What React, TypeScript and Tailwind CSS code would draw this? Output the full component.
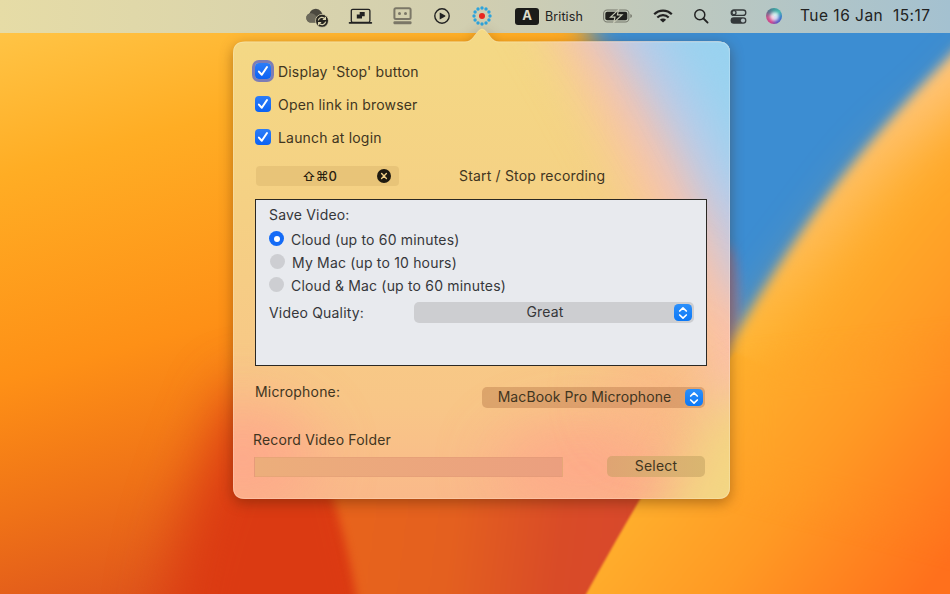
import { useState } from 'react'
import type { ReactNode } from 'react'

const RADIO_OPTIONS = [
  { id: 'cloud', label: 'Cloud (up to 60 minutes)', inset: 'pl-[13px]' },
  { id: 'mac', label: 'My Mac (up to 10 hours)', inset: 'pl-[14px]' },
  { id: 'both', label: 'Cloud & Mac (up to 60 minutes)', inset: 'pl-[13px]' },
]

const DOTS = Array.from({ length: 12 }, (_, i) => (i * Math.PI) / 6)

function Blur({ id, amount }: { id: string; amount: number }) {
  return (
    <filter id={id} x="-70%" y="-70%" width="240%" height="240%" colorInterpolationFilters="sRGB">
      <feGaussianBlur stdDeviation={amount} />
    </filter>
  )
}

function Wallpaper() {
  return (
    <svg className="absolute inset-0" width="950" height="594" viewBox="0 0 950 594">
      <defs>
        <linearGradient id="base" gradientUnits="userSpaceOnUse" x1="0" y1="20" x2="160" y2="600">
          <stop offset="0" stopColor="#ffc648" />
          <stop offset="0.25" stopColor="#ffad24" />
          <stop offset="0.58" stopColor="#fe9016" />
          <stop offset="0.8" stopColor="#ef7217" />
          <stop offset="1" stopColor="#de541c" />
        </linearGradient>
        <linearGradient id="petal" gradientUnits="userSpaceOnUse" x1="700" y1="360" x2="950" y2="560">
          <stop offset="0" stopColor="#ffb52f" />
          <stop offset="0.5" stopColor="#ff9a24" />
          <stop offset="1" stopColor="#ff701c" />
        </linearGradient>
        <linearGradient id="highlight" gradientUnits="userSpaceOnUse" x1="0" y1="60" x2="0" y2="360">
          <stop offset="0" stopColor="#ffc67e" />
          <stop offset="0.6" stopColor="#ffbe5c" />
          <stop offset="1" stopColor="#ffb836" />
        </linearGradient>
        <linearGradient id="middle" gradientUnits="userSpaceOnUse" x1="330" y1="500" x2="640" y2="540">
          <stop offset="0" stopColor="#e8641b" />
          <stop offset="0.4" stopColor="#e4601f" />
          <stop offset="0.75" stopColor="#d94b27" />
          <stop offset="1" stopColor="#d8482c" />
        </linearGradient>
        <Blur id="b1" amount={1} />
        <Blur id="b3" amount={5} />
        <Blur id="b6" amount={6} />
        <Blur id="b14" amount={14} />
        <Blur id="b26" amount={28} />
      </defs>
      <rect width="950" height="594" fill="url(#base)" />
      <path d="M235 390 C205 470 165 540 160 680 L420 680 L350 390Z" fill="#db3a12" filter="url(#b26)" />
      <path d="M322 460 C340 520 352 560 360 620 L660 620 L660 460Z" fill="url(#middle)" filter="url(#b3)" />
      <path d="M562 -40 L1000 -40 L1000 120 L720 420 L690 300 Z" fill="#3c8dd2" filter="url(#b14)" />
      <ellipse cx="727" cy="305" rx="12" ry="60" fill="#a87289" opacity="0.7" filter="url(#b6)" />
      <path d="M1004 0 L948 58 C915 92 870 140 827 197 C790 246 757 300 732 341 L700 420 L1000 560Z" fill="url(#highlight)" filter="url(#b6)" />
      <path d="M1004 60 L948 118 C915 142 885 170 848 221 C811 270 784 305 752 351 L690 450 L700 640 L1060 640 L1060 60Z" fill="url(#petal)" filter="url(#b26)" />
      <path d="M735 352 C680 430 638 500 585 596 L1000 640 L1000 480Z" fill="url(#petal)" filter="url(#b1)" />
      <path d="M1040 340 V560 L740 480 L745 370Z" fill="url(#petal)" filter="url(#b14)" />
    </svg>
  )
}

function PopoverBackdrop() {
  return (
    <svg className="absolute left-0 top-[-13px] drop-shadow-[0_4px_7px_rgba(70,30,0,0.4)]" width="497" height="471" viewBox="0 0 497 471">
      <defs>
        <clipPath id="pop">
          <path d="M12 13.500 H232 C239 13.500 241 7 246 2 Q249 -1 252 2 C257 7 259 13.500 266 13.500 H485 Q497 13.500 497 25 V459 Q497 471 485 471 H12 Q0 471 0 459 V25 Q0 13.500 12 13.500Z" />
        </clipPath>
        <linearGradient id="popBase" x1="0" y1="0" x2="0" y2="1">
          <stop offset="0" stopColor="#f4d985" />
          <stop offset="0.4" stopColor="#f5d084" />
          <stop offset="0.8" stopColor="#f8c687" />
          <stop offset="1" stopColor="#fab98a" />
        </linearGradient>
        <Blur id="p22" amount={24} />
        <Blur id="p30" amount={30} />
      </defs>
      <g clipPath="url(#pop)">
        <rect width="497" height="471" fill="url(#popBase)" />
        <path d="M285 -60 L560 -60 L560 400 L480 390 C465 280 410 150 285 -60Z" fill="#fbc2a9" filter="url(#p22)" />
        <path d="M325 -60 L560 -60 L560 300 L500 260 C470 170 415 70 325 -60Z" fill="#bccbea" filter="url(#p22)" />
        <path d="M385 -60 L560 -60 L560 190 L505 160 C475 90 435 30 385 -60Z" fill="#99d2ef" filter="url(#p22)" />
        <ellipse cx="10" cy="430" rx="75" ry="55" fill="#fea68b" opacity="0.85" filter="url(#p30)" />
        <ellipse cx="350" cy="440" rx="90" ry="45" fill="#fea78a" opacity="0.85" filter="url(#p30)" />
        <ellipse cx="420" cy="365" rx="45" ry="45" fill="#fdb089" opacity="0.6" filter="url(#p30)" />
        <path d="M560 345 L480 385 L410 530 L560 530Z" fill="#f3d683" filter="url(#p22)" />
      </g>
      <path d="M12 14 H232 C239 14 241 7 246 2.500 Q249 0 252 2.500 C257 7 259 14 266 14 H485 Q496.500 14 496.500 25 V459 Q496.500 470.500 485 470.500 H12 Q0.500 470.500 0.500 459 V25 Q0.500 14 12 14Z" fill="none" stroke="#fff" strokeOpacity="0.2" />
    </svg>
  )
}

function MenuBar() {
  return (
    <header className="relative flex h-[33px] items-center bg-linear-to-r from-[#e6dca6] via-[#d1ceb0] to-[#a4c1d0] pl-[305px] pb-px text-[#222]">
      <svg width="24" height="20" viewBox="0 0 24 20" className="mt-[3px]">
        <path d="M5 14.500 A4.700 4.700 0 0 1 4.500 5.500 A6.500 6.500 0 0 1 16 3.500 L18 7 L12 14.500Z" fill="#4b493f" />
        <path d="M4.500 5.500 C9 4 10 8 13 9 L12 14.500 H5 A4.700 4.700 0 0 1 4.500 5.500Z" fill="#6d6a5b" />
        <circle cx="17" cy="12.800" r="6.500" fill="#25241f" stroke="#d9d3ae" strokeWidth="0.800" />
        <path d="M13.300 12.300 A3.800 3.800 0 0 1 20 10.800 M20.400 8.700 V11.300 H17.800 M20.700 13.700 A3.800 3.800 0 0 1 14 15.200 M13.600 17.300 V14.700 H16.200" fill="none" stroke="#d9d3ae" strokeWidth="1.200" />
      </svg>
      <svg width="26" height="17" viewBox="0 0 26 17" className="ml-[19px]">
        <rect x="3.300" y="1.300" width="18.600" height="13" rx="1.500" fill="none" stroke="currentColor" strokeWidth="1.300" />
        <path d="M1.500 14.900 H23.400" stroke="currentColor" strokeWidth="1.600" strokeLinecap="round" />
        <path d="M11.700 4 H16.700 V8.200 H14 V10.600 H8.800 V6.600 H11.700Z" fill="currentColor" />
      </svg>
      <svg width="19" height="18" viewBox="0 0 19 18" className="ml-[19px] text-[#7b7767]">
        <rect x="1.400" y="1.300" width="16.200" height="10.700" rx="1.500" fill="none" stroke="currentColor" strokeWidth="2" />
        <circle cx="6.500" cy="6.500" r="1.500" fill="currentColor" />
        <circle cx="12.500" cy="6.500" r="1.500" fill="currentColor" />
        <rect x="0.500" y="14.300" width="18" height="3" rx="1" fill="currentColor" />
      </svg>
      <svg width="16" height="16" viewBox="0 0 16 16" className="ml-[22px]">
        <circle cx="8" cy="8" r="7.200" fill="none" stroke="currentColor" strokeWidth="1.400" />
        <path d="M5.700 4.900 Q5.700 4.400 6.200 4.700 L11.200 7.600 Q11.700 8 11.200 8.400 L6.200 11.300 Q5.700 11.600 5.700 11.100Z" fill="currentColor" />
      </svg>
      <svg width="20" height="20" viewBox="0 0 20 20" className="ml-[22px]">
        {DOTS.map((a) => (
          <circle key={a} cx={10 + 8 * Math.cos(a)} cy={10 + 8 * Math.sin(a)} r="1.700" fill="#2da3dc" />
        ))}
        <circle cx="10" cy="10" r="3" fill="#e8261f" />
      </svg>
      <span className="ml-[23px] flex h-[17px] w-[24px] items-center justify-center rounded-[3px] bg-[#1b1b19] text-[13px] font-bold text-[#dcdccb]">A</span>
      <span className="ml-[6px] w-[38px] whitespace-nowrap pt-[2px] text-[12.500px] tracking-[0.100px]">British</span>
      <svg width="30" height="14" viewBox="0 0 30 14" className="ml-[20px]">
        <rect x="0.600" y="1" width="25.300" height="12" rx="3.600" fill="none" stroke="#77796d" strokeWidth="1.100" />
        <path d="M27.300 5 Q29 5.500 29 7 Q29 8.500 27.300 9Z" fill="#77796d" />
        <rect x="2.300" y="2.700" width="22" height="8.600" rx="2" fill="#20201d" />
        <path d="M15.600 0.600 L7.600 8.100 H12 L10.800 13.400 L19 5.900 H14.400Z" fill="#20201d" stroke="#c9ccb8" strokeWidth="1.200" />
      </svg>
      <svg width="20" height="14" viewBox="0 0 20 14" className="ml-[20px]">
        <path d="M1.200 5.300 A12.400 12.400 0 0 1 18.800 5.300" fill="none" stroke="currentColor" strokeWidth="2.200" />
        <path d="M4.300 8.500 A8 8 0 0 1 15.700 8.500" fill="none" stroke="currentColor" strokeWidth="2.100" />
        <path d="M10 13.600 L6.900 10.700 A4.400 4.400 0 0 1 13.100 10.700Z" fill="currentColor" />
      </svg>
      <svg width="16" height="16" viewBox="0 0 16 16" className="ml-[20px]">
        <circle cx="6.800" cy="6.800" r="5" fill="none" stroke="currentColor" strokeWidth="1.500" />
        <path d="M10.500 10.500 L14.600 14.600" stroke="currentColor" strokeWidth="1.800" strokeLinecap="round" />
      </svg>
      <svg width="17" height="15" viewBox="0 0 17 15" className="ml-[21px]">
        <rect x="1.200" y="1" width="14.600" height="5.400" rx="2.700" fill="none" stroke="#33383a" strokeWidth="1.300" />
        <circle cx="4" cy="3.700" r="2" fill="none" stroke="#33383a" strokeWidth="1.300" />
        <rect x="0.600" y="8.300" width="15.800" height="6.400" rx="3.200" fill="#33383a" />
        <circle cx="13" cy="11.500" r="2.100" fill="#b6c3c4" />
      </svg>
      <span className="ml-[19px] flex size-4 items-center justify-center rounded-full bg-[conic-gradient(#3f9a9c,#45b7b0,#3272c8,#5b4fc0,#cf3f8a,#c4548c,#5c6f8c,#3f9a9c)]">
        <span className="size-[9px] rounded-full bg-white/80 blur-[1.500px]" />
      </span>
      <span className="ml-[18px] whitespace-pre text-[15.500px] tracking-[0.480px]">Tue 16 Jan  15:17</span>
    </header>
  )
}

function Checkbox({ label, checked, focused, onChange }: { label: string; checked: boolean; focused?: boolean; onChange: () => void }) {
  return (
    <label className="flex h-[33px] items-center gap-[7px]">
      <button
        onClick={onChange}
        className={`mb-px flex size-4 items-center justify-center rounded-[4px] bg-linear-to-b from-[#2c7df8] to-[#0a62f4] ${focused ? 'ring-[3px] ring-[#7d7db5]' : ''}`}
      >
        {checked && (
          <svg width="12" height="12" viewBox="0 0 12 12">
            <path d="M1.900 6.600 L4.800 9.700 L10 2" fill="none" stroke="#fff" strokeWidth="2" strokeLinecap="round" strokeLinejoin="round" />
          </svg>
        )}
      </button>
      <span className="pt-px">{label}</span>
    </label>
  )
}

function Stepper() {
  return (
    <span className="flex h-[17.500px] w-[18px] items-center justify-center rounded-[4.500px] bg-linear-to-b from-[#2b90fb] to-[#0a78f6]">
      <svg width="10" height="14" viewBox="0 0 10 14">
        <path d="M1.700 5 L5 1.900 L8.300 5 M1.700 9 L5 12.100 L8.300 9" fill="none" stroke="#fff" strokeWidth="1.700" strokeLinecap="round" strokeLinejoin="round" />
      </svg>
    </span>
  )
}

function PopUpButton({ className, children }: { className: string; children: ReactNode }) {
  return (
    <button className={`flex items-center rounded-[5px] pr-[2px] ${className}`}>
      <span className="flex-1 pb-[2px] pl-[2px] text-center">{children}</span>
      <Stepper />
    </button>
  )
}

export default function App() {
  const [checks, setChecks] = useState([true, true, true])
  const [target, setTarget] = useState('cloud')

  const toggle = (i: number) => setChecks(checks.map((c, n) => (n === i ? !c : c)))

  return (
    <div className="relative h-[594px] w-[950px] overflow-hidden font-['Inter',sans-serif]">
      <Wallpaper />
      <MenuBar />

      {/* Preferences popover */}
      <main className="relative ml-[233px] mt-[8px] h-[458px] w-[497px] whitespace-nowrap text-[14px] leading-5 tracking-[0.180px] text-[#41351f]">
        <PopoverBackdrop />
        <div className="relative pt-[14px]">
          <div className="pl-[22px]">
            <Checkbox label="Display 'Stop' button" checked={checks[0]} focused onChange={() => toggle(0)} />
            <Checkbox label="Open link in browser" checked={checks[1]} onChange={() => toggle(1)} />
            <Checkbox label="Launch at login" checked={checks[2]} onChange={() => toggle(2)} />
          </div>

          <div className="mt-[12px] flex h-[20px] items-center pl-[23px]">
            <div className="flex h-[20px] w-[143px] items-center justify-end rounded-[4px] bg-[#e5c176]/80 pr-[8px] text-[#2a210f]">
              <span className="mr-[40px] font-['Inter','DejaVu_Sans',sans-serif] text-[13px] font-medium tracking-normal">⇧⌘0</span>
              <svg width="14" height="14" viewBox="0 0 14 14">
                <circle cx="7" cy="7" r="7" fill="#1f1a10" />
                <path d="M4.600 4.600 L9.400 9.400 M9.400 4.600 L4.600 9.400" stroke="#f0cf88" strokeWidth="1.400" strokeLinecap="round" />
              </svg>
            </div>
            <span className="ml-[60px]">Start / Stop recording</span>
          </div>

          <section className="ml-[22px] mt-[13px] h-[167px] w-[452px] border border-[#2b2823] bg-[#e8eaee] pt-[5px] text-[#36373a]">
            <h2 className="h-[22px] pl-[13px]">Save Video:</h2>
            <div className="pt-px">
              {RADIO_OPTIONS.map((o) => (
                <label key={o.id} className={`flex h-[23px] items-center gap-[7px] ${o.inset}`}>
                  <button
                    onClick={() => setTarget(o.id)}
                    className={`mb-[2px] flex size-[15px] items-center justify-center rounded-full ${target === o.id ? 'bg-[#146bf6]' : 'bg-[#cdced2]'}`}
                  >
                    {target === o.id && <span className="size-[6px] rounded-full bg-white" />}
                  </button>
                  <span>{o.label}</span>
                </label>
              ))}
            </div>
            <div className="mt-[5px] flex items-center justify-between pl-[13px] pr-[12px]">
              <span>Video Quality:</span>
              <PopUpButton className="h-[21px] w-[280px] bg-[#cdced1]">Great</PopUpButton>
            </div>
          </section>

          <div className="mt-[16px] flex items-start justify-between pl-[22px] pr-[25px]">
            <span>Microphone:</span>
            <PopUpButton className="mt-[5px] h-[21px] w-[223px] bg-[#a8683a]/35 tracking-[0.100px]">MacBook Pro Microphone</PopUpButton>
          </div>

          <div className="mt-[22px] pl-[20px]">Record Video Folder</div>
          <div className="mt-[6px] flex items-center justify-between pl-[21px] pr-[25px]">
            <div className="h-[20px] w-[309px] border border-[#d8906c]/25 bg-linear-to-r from-[#ecae7b] to-[#eb9f7f]" />
            <button className="h-[21px] w-[98px] rounded-[5px] bg-linear-to-r from-[#dfa473] to-[#d9b670] pb-px">Select</button>
          </div>
        </div>
      </main>
    </div>
  )
}
